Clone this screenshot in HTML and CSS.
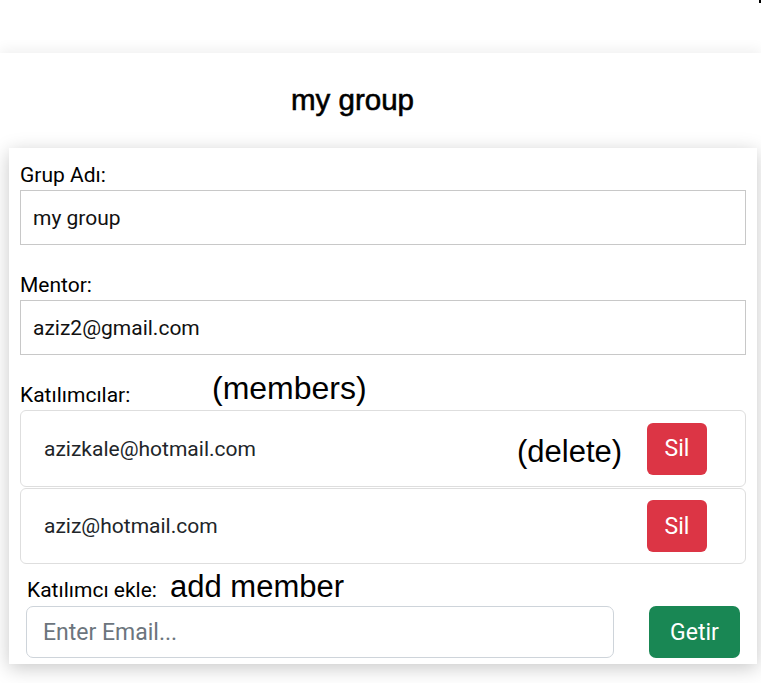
FILE: index.html
```html
<!DOCTYPE html>
<html lang="tr">
<head>
<meta charset="utf-8">
<title>my group</title>
<link rel="stylesheet" href="styles.css">
</head>
<body>
<header class="topbar"><span class="corner"></span></header>
<main class="main">
  <h1 class="title">my group</h1>
  <section class="card">
    <label class="label" for="gname">Grup Adı:</label>
    <input class="field" id="gname" type="text" value="my group">

    <label class="label gap" for="mentor">Mentor:</label>
    <input class="field" id="mentor" type="text" value="aziz2@gmail.com">

    <div class="label gap">Katılımcılar:</div>
    <ul class="members">
      <li class="member"><span class="email">azizkale@hotmail.com</span><button class="btn btn-del">Sil</button></li>
      <li class="member"><span class="email">aziz@hotmail.com</span><button class="btn btn-del">Sil</button></li>
    </ul>

    <div class="add">
      <div class="label small">Katılımcı ekle:</div>
      <div class="add-row">
        <input class="field rounded" type="email" placeholder="Enter Email...">
        <button class="btn btn-get">Getir</button>
      </div>
    </div>

    <span class="note note-members">(members)</span>
    <span class="note note-delete">(delete)</span>
    <span class="note note-add">add member</span>
  </section>
</main>
</body>
</html>
```
FILE: styles.css
```css
* { box-sizing: border-box; }
html, body { margin: 0; padding: 0; background: #fff; }
body { font-family: Roboto, "Noto Sans", sans-serif; color: #000; }

.topbar { height: 53px; position: relative; background: #fff; }
.corner { position: absolute; right: 0; top: 0; width: 2px; height: 3px; background: #000; }

.main {
  background: #fff;
  box-shadow: 0 -4px 12px rgba(0,0,0,0.06);
  padding-top: 29px;
  padding-bottom: 19px;
  position: relative;
}

.title {
  margin: 0 56px 0 0;
  text-align: center;
  font-family: "Liberation Sans", Arial, sans-serif;
  font-weight: normal;
  font-size: 29.5px;
  line-height: 1.2;
  -webkit-text-stroke: 0.6px #000;
}

.card {
  position: relative;
  margin: 31px 0 0 9px;
  width: 748px;
  background: #fff;
  padding: 13px 11px 6px 11px;
  box-shadow: 0 4px 18px rgba(0,0,0,0.22);
}

.label {
  display: block;
  font-size: 21px;
  line-height: 29px;
  color: #000;
}
.label.gap { margin-top: 26px; }
.label.small { padding-left: 1px; }

.field {
  display: block;
  width: 100%;
  height: 55px;
  margin: 0;
  border: 1px solid #c8c8c8;
  border-radius: 0;
  padding: 0 12px;
  font-family: Roboto, sans-serif;
  font-size: 21px;
  color: #111;
  background: #fff;
  outline: none;
}
.field.rounded {
  height: 52px;
  border: 1px solid #ced4da;
  border-radius: 7px;
  padding: 0 16px;
  font-size: 23px;
}
.field::placeholder { color: #6c757d; }

.members { list-style: none; margin: 0; padding: 0; }
.member {
  display: flex;
  align-items: center;
  justify-content: space-between;
  height: 77px;
  border: 1px solid #dedede;
  border-radius: 6px;
  padding: 0 38px 0 23px;
}
.member + .member { margin-top: 1px; height: 76px; }
.email { font-size: 21px; color: #212529; }

.btn {
  border: 0;
  color: #fff;
  font-family: Roboto, sans-serif;
  cursor: pointer;
}
.btn-del {
  width: 60px;
  height: 52px;
  border-radius: 6px;
  background: #dc3545;
  font-size: 23px;
}

.add { padding: 12px 6px 0; }
.add-row {
  display: grid;
  grid-template-columns: 1fr 91px;
  column-gap: 35px;
  margin-top: 1px;
}
.btn-get {
  height: 52px;
  border-radius: 7px;
  background: #198754;
  font-size: 23px;
}

.note {
  position: absolute;
  font-family: "Liberation Sans", Arial, sans-serif;
  font-size: 31px;
  line-height: 1;
  color: #000;
  white-space: nowrap;
}
.note-members { left: 203px; top: 224px; font-size: 32px; }
.note-delete { left: 508px; top: 288px; }
.note-add { left: 161px; top: 423px; }
```
